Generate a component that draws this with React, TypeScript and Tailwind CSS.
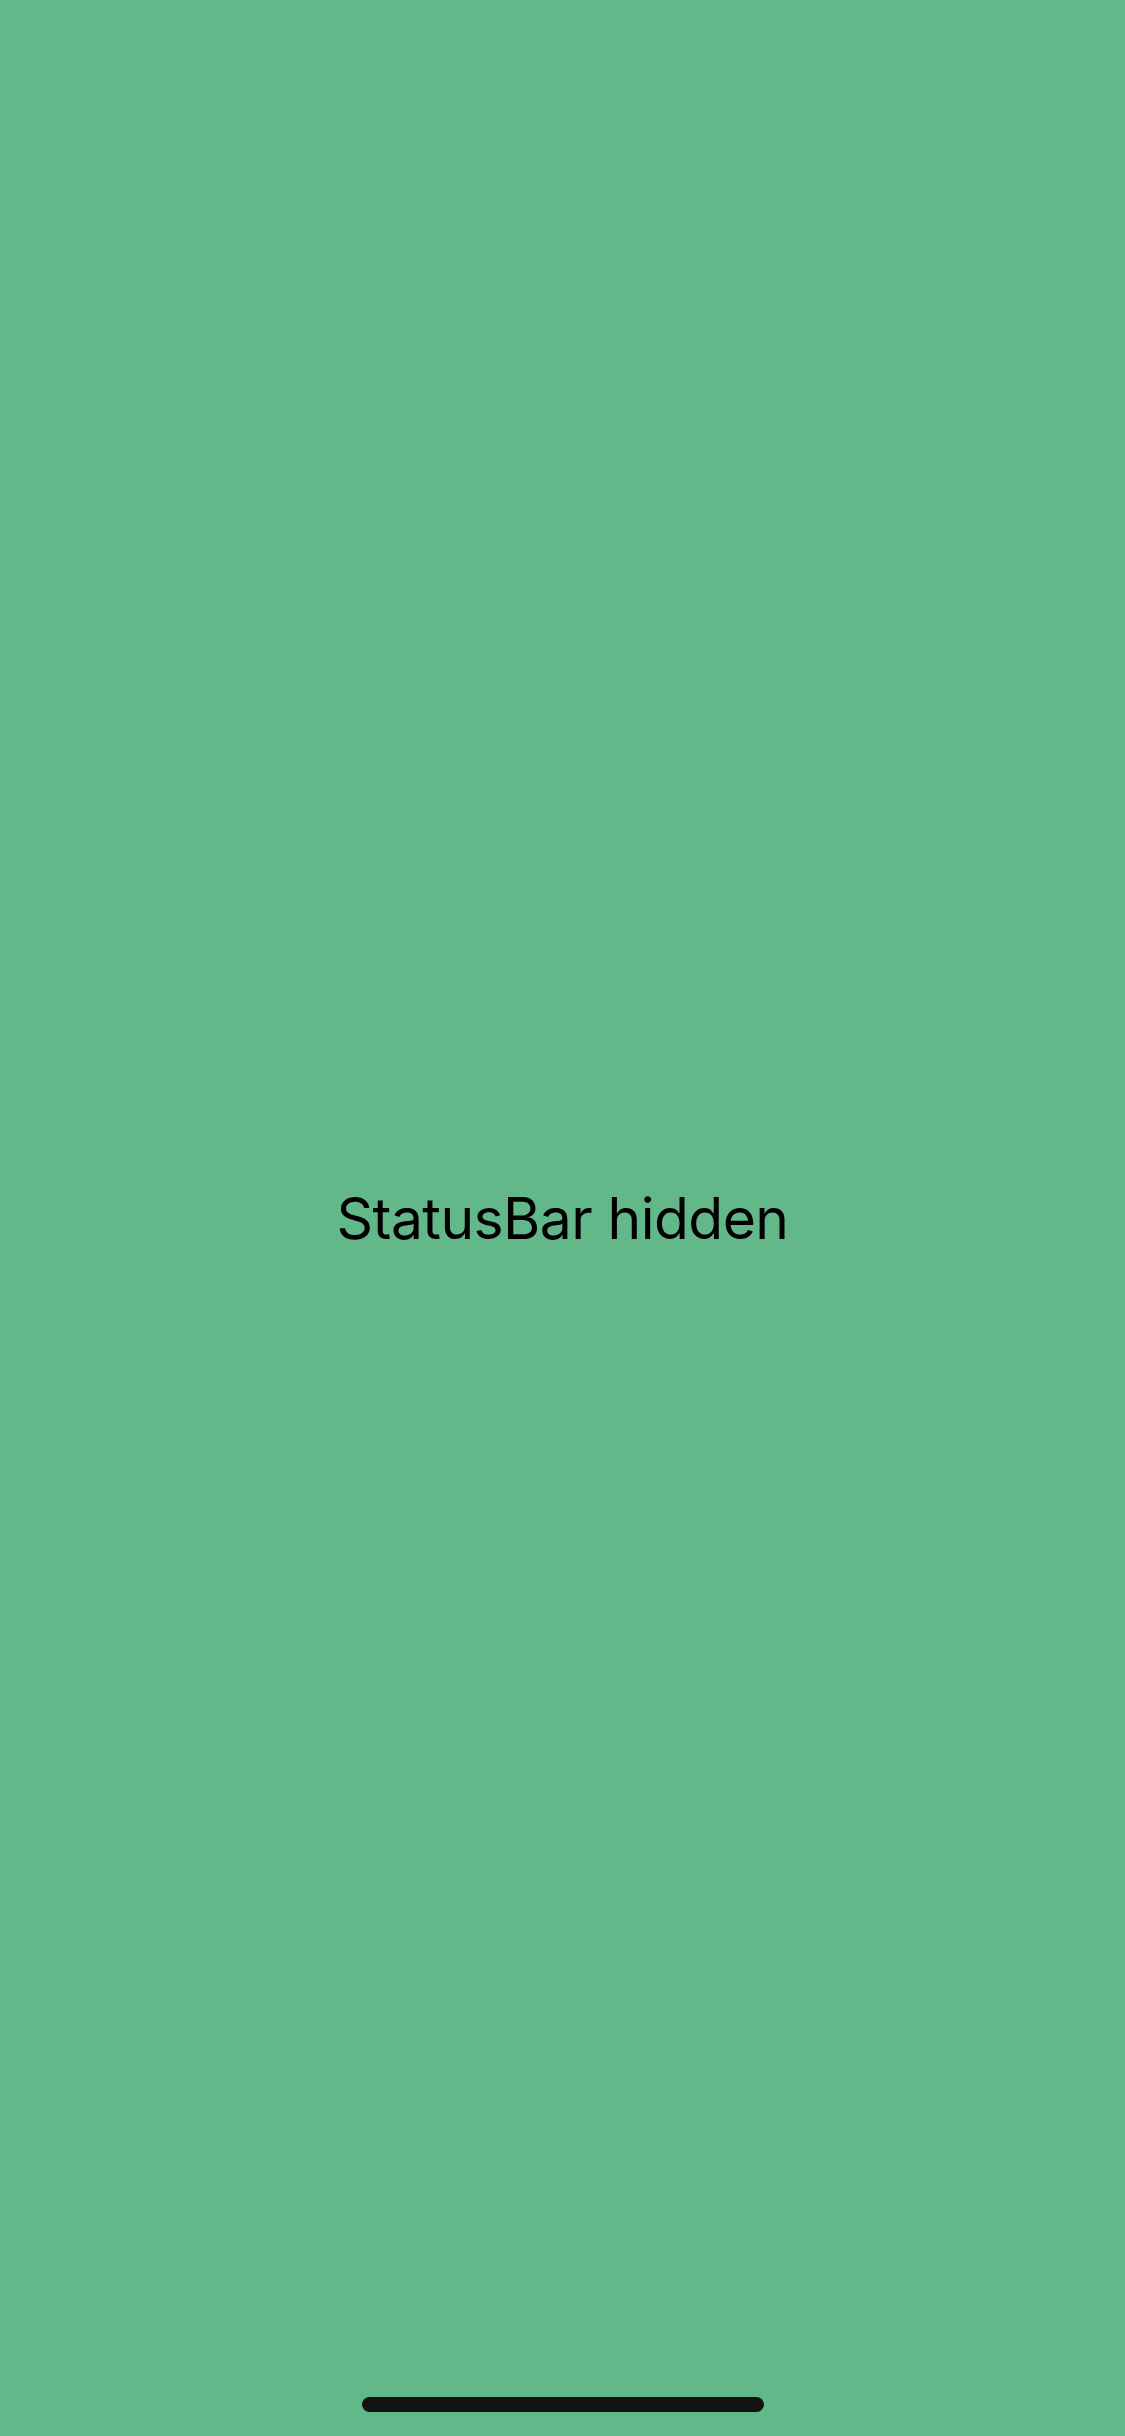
export default function App() {
  return (
    <div className="relative flex h-[2436px] w-[1125px] items-center justify-center bg-[#63b88a]">
      <span className="font-['Inter',sans-serif] text-[57px] leading-none tracking-[-0.01em] text-black">
        StatusBar hidden
      </span>
      {/* home indicator */}
      <div className="absolute bottom-[24px] left-[362px] h-[15px] w-[402px] rounded-full bg-[#131313]" />
    </div>
  );
}
